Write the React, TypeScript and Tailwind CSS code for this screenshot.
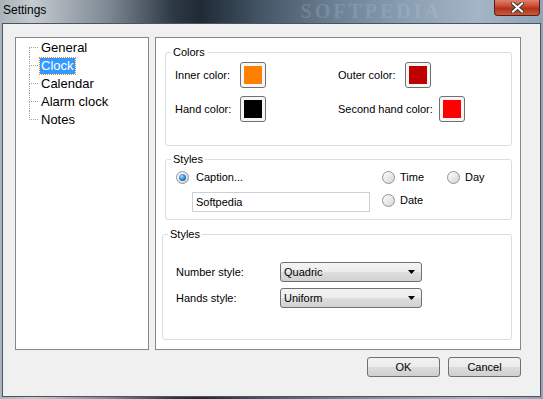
import React from 'react'

// ─── Small controls ───────────────────────────────────────────────────────────

function Swatch({ fill }: { fill: string }) {
  return (
    <div className="w-[26px] h-[26px] rounded-[3px] border border-[#707070] bg-[#f6f6f6] p-[3px] shrink-0">
      <div className={`w-full h-full ${fill}`} />
    </div>
  )
}

function Radio({ checked = false }: { checked?: boolean }) {
  return (
    <span className="w-[13px] h-[13px] rounded-full border border-[#8e9196] bg-[linear-gradient(135deg,#fefefe,#d3d5d8)] flex items-center justify-center shrink-0">
      {checked && (
        <span className="w-[7px] h-[7px] rounded-full bg-[radial-gradient(circle_at_40%_35%,#a8dcff,#2a7fd0_55%,#123f72)]" />
      )}
    </span>
  )
}

function Select({ value }: { value: string }) {
  return (
    <div className="w-[142px] h-[20px] rounded-[3px] border border-[#707070] bg-[linear-gradient(#f4f4f4,#ececec_50%,#dedede_50%,#d2d2d2)] flex items-center justify-between pl-[3px] pr-[6px]">
      <span>{value}</span>
      <svg width="7" height="4" viewBox="0 0 7 4">
        <path d="M0 0h7L3.5 4z" fill="#000" />
      </svg>
    </div>
  )
}

function Button({ label }: { label: string }) {
  return (
    <div className="w-[73px] h-[20px] rounded-[3px] border border-[#707070] bg-[linear-gradient(#f2f2f2,#ebebeb_50%,#dddddd_50%,#cfcfcf)] flex items-center justify-center">
      {label}
    </div>
  )
}

function Group({ title, className, children }: { title: string; className: string; children: React.ReactNode }) {
  return (
    <fieldset className={`border border-[#d5dfe5] rounded-[3px] ${className}`}>
      <legend className="ml-[5px] px-[2px] leading-[16px]">{title}</legend>
      {children}
    </fieldset>
  )
}

// ─── Tree ─────────────────────────────────────────────────────────────────────

const TREE = ['General', 'Clock', 'Calendar', 'Alarm clock', 'Notes']

function Tree() {
  return (
    <div className="w-[134px] h-[313px] border border-[#828790] bg-white pl-[13px] pt-[1px] text-[13px]">
      {TREE.map((item, i) => (
        <div key={item} className="flex items-center h-[18px]">
          <div className="w-[9px] h-[18px] flex flex-col">
            <div className={`h-[9px] border-b border-dotted border-[#a0a0a0] ${i > 0 ? 'border-l' : ''}`} />
            <div className={`h-[9px] border-dotted border-[#a0a0a0] ${i < TREE.length - 1 ? 'border-l' : ''}`} />
          </div>
          <span
            className={`ml-[2px] px-[1px] h-[16px] leading-[16px] ${
              i === 1 ? 'bg-[#3399ff] text-white outline outline-1 outline-dotted outline-[#c98a3a]' : 'text-black'
            }`}
          >
            {item}
          </span>
        </div>
      ))}
    </div>
  )
}

// ─── Main ─────────────────────────────────────────────────────────────────────

export default function App() {
  return (
    <div className="w-[543px] h-[399px] flex flex-col overflow-hidden bg-[linear-gradient(90deg,#aab3bb_0%,#c3cad0_6%,#7d8893_20%,#2c3844_32%,#1f2a35_37%,#445566_48%,#6d8194_62%,#8da1b4_76%,#a3b5c6_88%,#90a4b8_100%)] font-['Liberation_Sans',sans-serif] text-[11px] text-black">
      {/* Title bar */}
      <div className="h-[23px] flex items-start pl-[3px] pr-[3px]">
        <span className="mt-[3px] leading-[14px] text-[12px] text-black">Settings</span>
        <span className="ml-auto mr-[52px] mt-[1px] leading-[21px] font-['Liberation_Serif',serif] font-bold text-[20px] tracking-[3px] text-[#c8d6e4]/20">
          SOFTPEDIA
        </span>
        <div className="w-[46px] h-[16px] rounded-b-[4px] border border-t-0 border-[#5b1d12] bg-[linear-gradient(#e0826c,#c8452c_45%,#b23219_55%,#c95a3c)] flex items-center justify-center">
          <svg width="13" height="11" viewBox="0 0 13 11">
            <path d="M2 1.5l9 8M11 1.5l-9 8" stroke="#3a3a3a" strokeWidth="4" strokeLinecap="square" />
            <path d="M2 1.5l9 8M11 1.5l-9 8" stroke="#fff" strokeWidth="2" strokeLinecap="square" />
          </svg>
        </div>
      </div>

      {/* Client area */}
      <div className="flex-1 ml-[2px] mr-[2px] mb-[2px] border border-[#4a5560] bg-[#f0f0f0] pl-[12px] pt-[13px]">
        <div className="flex gap-[6px]">
          <Tree />

          <div className="w-[366px] h-[313px] border border-[#828790] bg-white pt-[6px]">
            {/* Colors */}
            <Group title="Colors" className="ml-[9px] mr-[8px] pb-[23px]">
              <div className="flex mt-[2px] pl-[9px]">
                <div className="w-[163px] flex flex-col gap-[8px]">
                  <div className="flex items-center">
                    <span className="w-[65px]">Inner color:</span>
                    <Swatch fill="bg-[#ff8000]" />
                  </div>
                  <div className="flex items-center">
                    <span className="w-[65px]">Hand color:</span>
                    <Swatch fill="bg-black" />
                  </div>
                </div>
                <div className="flex flex-col gap-[8px]">
                  <div className="flex items-center">
                    <span className="w-[67px]">Outer color:</span>
                    <Swatch fill="bg-[#c00000]" />
                  </div>
                  <div className="flex items-center">
                    <span className="w-[101px]">Second hand color:</span>
                    <Swatch fill="bg-[#ff0000]" />
                  </div>
                </div>
              </div>
            </Group>

            {/* Styles: caption */}
            <Group title="Styles" className="mt-[5px] ml-[9px] mr-[8px] pb-[7px]">
              <div className="flex mt-[2px] pl-[10px]">
                <div className="w-[206px]">
                  <div className="flex items-center gap-[7px] h-[16px]">
                    <Radio checked />
                    <span>Caption...</span>
                  </div>
                  <div className="ml-[16px] mt-[7px] w-[178px] h-[20px] border border-[#c9d1d8] bg-white flex items-center pl-[3px]">
                    Softpedia
                  </div>
                </div>
                <div className="flex flex-col gap-[7px]">
                  <div className="flex h-[16px]">
                    <div className="w-[65px] flex items-center gap-[5px]">
                      <Radio />
                      <span>Time</span>
                    </div>
                    <div className="flex items-center gap-[5px]">
                      <Radio />
                      <span>Day</span>
                    </div>
                  </div>
                  <div className="flex items-center gap-[5px] h-[16px]">
                    <Radio />
                    <span>Date</span>
                  </div>
                </div>
              </div>
            </Group>

            {/* Styles: dial */}
            <Group title="Styles" className="mt-[6px] ml-[6px] mr-[8px] pb-[31px]">
              <div className="flex flex-col gap-[6px] mt-[20px] pl-[13px]">
                <div className="flex items-center">
                  <span className="w-[104px]">Number style:</span>
                  <Select value="Quadric" />
                </div>
                <div className="flex items-center">
                  <span className="w-[104px]">Hands style:</span>
                  <Select value="Uniform" />
                </div>
              </div>
            </Group>
          </div>
        </div>

        {/* Buttons */}
        <div className="w-[506px] flex justify-end gap-[8px] mt-[7px]">
          <Button label="OK" />
          <Button label="Cancel" />
        </div>
      </div>
    </div>
  )
}
